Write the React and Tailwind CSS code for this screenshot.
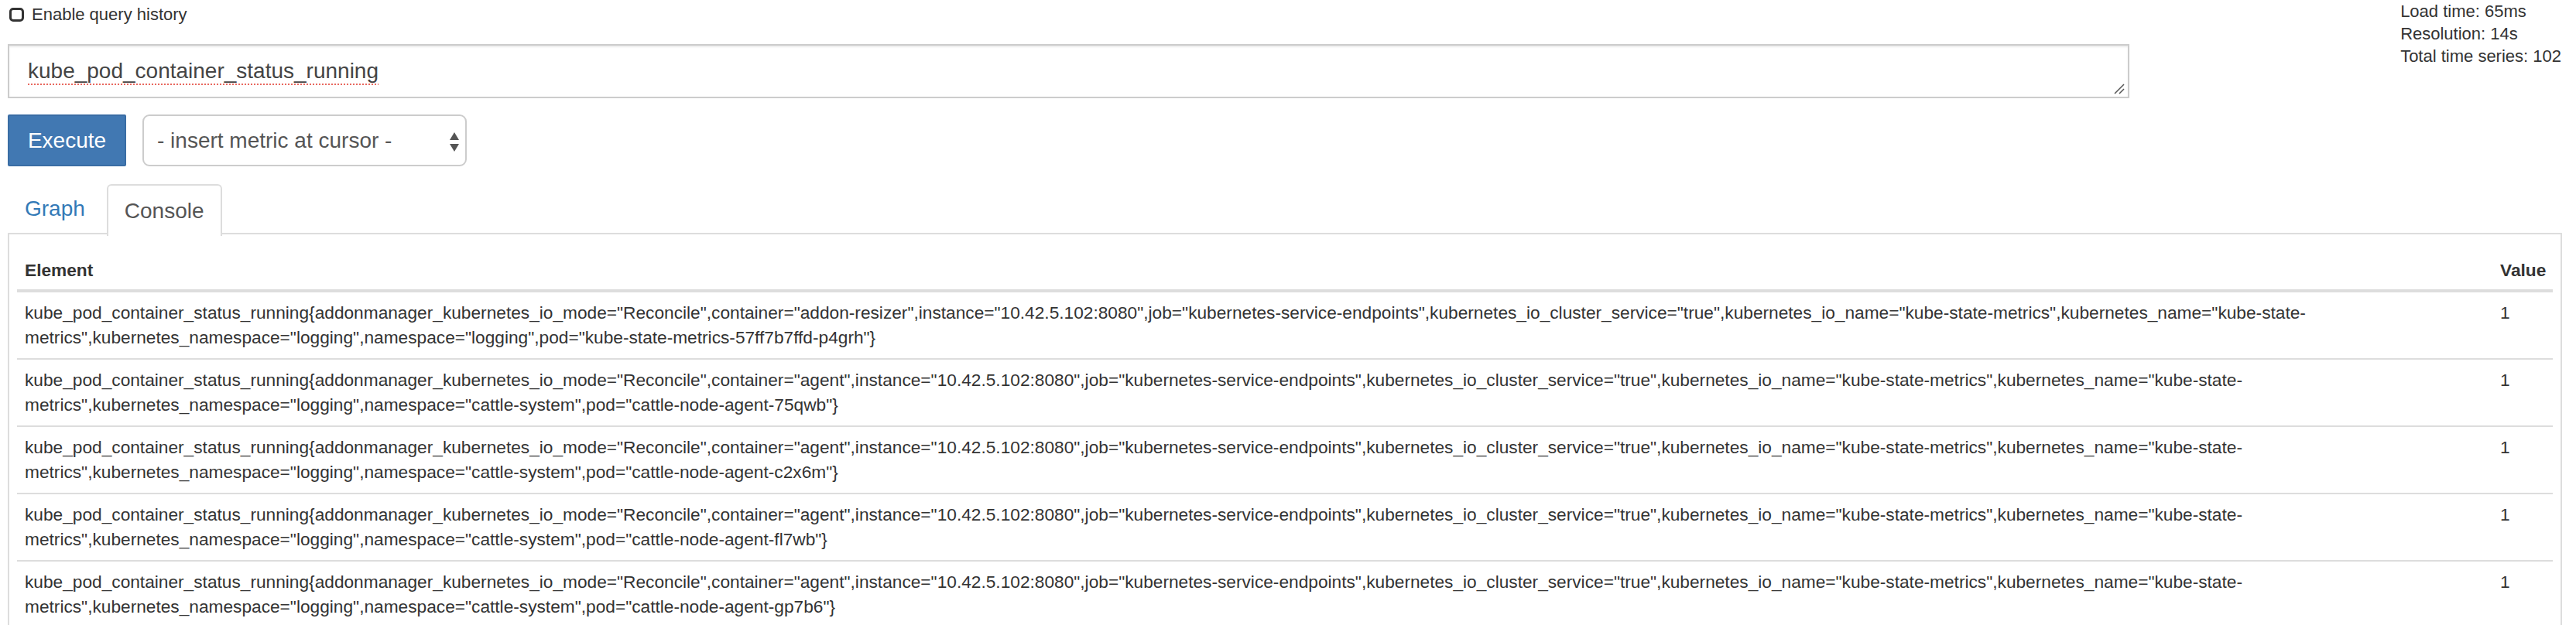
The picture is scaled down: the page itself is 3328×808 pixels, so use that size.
import React from 'react'

const rows = [
  { labels: 'container="addon-resizer",', ns: 'logging', pod: 'kube-state-metrics-57ff7b7ffd-p4grh' },
  { labels: 'container="agent",', ns: 'cattle-system', pod: 'cattle-node-agent-75qwb' },
  { labels: 'container="agent",', ns: 'cattle-system', pod: 'cattle-node-agent-c2x6m' },
  { labels: 'container="agent",', ns: 'cattle-system', pod: 'cattle-node-agent-fl7wb' },
  { labels: 'container="agent",', ns: 'cattle-system', pod: 'cattle-node-agent-gp7b6' },
]

function metric(r) {
  return 'kube_pod_container_status_running{addonmanager_kubernetes_io_mode="Reconcile",' + r.labels +
    'instance="10.42.5.102:8080",job="kubernetes-service-endpoints",kubernetes_io_cluster_service="true",kubernetes_io_name="kube-state-metrics",kubernetes_name="kube-state-metrics",kubernetes_namespace="logging",namespace="' +
    r.ns + '",pod="' + r.pod + '"}'
}

export default function App() {
  return (
    <div className="w-[3328px] h-[808px] overflow-hidden bg-white text-[#333] font-['Liberation_Sans',Arial,sans-serif]">
      <div className="flex">
        <div className="w-[2741px] ml-[10px] pt-[8px]">
          <label className="flex items-center h-[21px] gap-[10px] text-[22px] leading-[21px]">
            <span className="ml-[2px] w-[19px] h-[18px] border-[3px] border-[#333] rounded-[5px] bg-white"></span>
            Enable query history
          </label>
          <div className="relative mt-[28px] h-[70px] border-2 border-[#ccc] bg-white shadow-[inset_0_2px_2px_rgba(0,0,0,0.075)] pl-[24px] flex items-center">
            <span className="text-[28px] leading-[32px] text-[#444] underline decoration-dotted decoration-[#e8685f] decoration-2 underline-offset-[7px]">kube_pod_container_status_running</span>
            <svg className="absolute right-[4px] bottom-[3px]" width="14" height="14" viewBox="0 0 14 14">
              <path d="M13 1 L1 13 M13 7 L7 13" stroke="#555" strokeWidth="1.5" fill="none" />
            </svg>
          </div>
          <div className="flex gap-[21px] mt-[21px]">
            <button className="w-[153px] h-[67px] bg-[#4178b2] border-2 border-[#3a6da4] text-white text-[28px] rounded-[2px]">Execute</button>
            <div className="relative w-[419px] h-[67px] border-2 border-[#ccc] rounded-[9px] bg-white flex items-center pl-[17px] text-[28px] text-[#555]">
              - insert metric at cursor -
              <svg className="absolute right-[8px] top-[21px]" width="12" height="26" viewBox="0 0 12 26">
                <path d="M6 0 L12 10 L0 10 Z M0 15 L12 15 L6 25 Z" fill="#555" />
              </svg>
            </div>
          </div>
        </div>
        <div className="ml-auto mr-[19px] text-[22px] leading-[29px] text-[#333]">
          <div>Load time: 65ms</div>
          <div>Resolution: 14s</div>
          <div>Total time series: 102</div>
        </div>
      </div>

      <div className="mx-[10px] w-[3300px] mt-[23px]">
        <div className="flex border-b-2 border-[#ddd] h-[65px]">
          <div className="px-[22px] mr-[6px] flex items-center text-[28px] text-[#337ab7]">Graph</div>
          <div className="px-[21px] flex items-center text-[28px] text-[#555] bg-white border-2 border-[#ddd] border-b-0 rounded-t-[6px] h-[67px] -mb-[2px]">Console</div>
        </div>
        <div className="border-2 border-t-0 border-[#ddd] px-[10px] pt-[10px]">
          <div className="flex h-[65px] items-end pb-[12px] text-[22.7px] font-bold leading-[26px] border-b-4 border-[#ddd]">
            <div className="flex-1 pl-[10px]">Element</div>
            <div className="w-[78px] pl-[10px]">Value</div>
          </div>
          {rows.map((r, i) => (
            <div key={i} className={`flex text-[22.7px] leading-[32px] pt-[10px] ${i > 0 ? 'border-t-2 border-[#ddd] h-[87px]' : 'h-[85px]'}`}>
              <div className="flex-1 pl-[10px] pr-[10px]">{metric(r)}</div>
              <div className="w-[78px] pl-[10px]">1</div>
            </div>
          ))}
        </div>
      </div>
    </div>
  )
}
